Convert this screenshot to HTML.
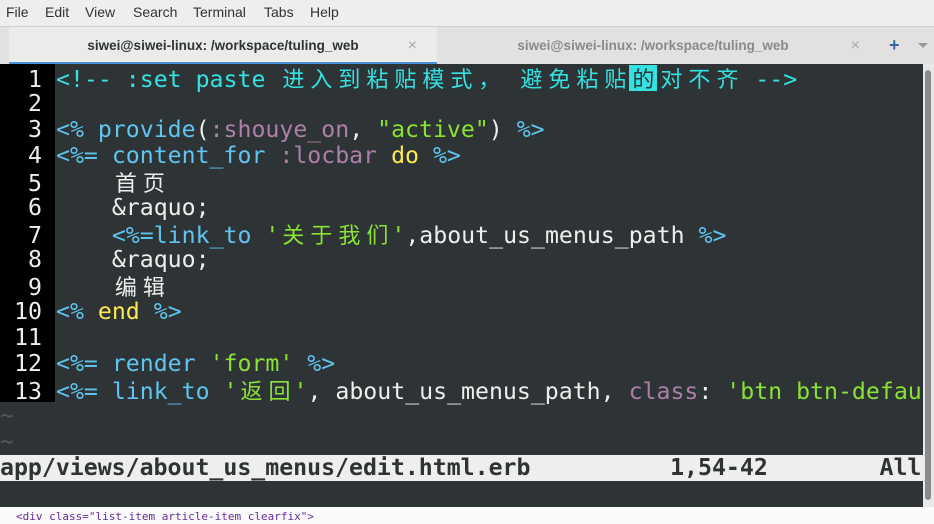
<!DOCTYPE html><html><head><meta charset="utf-8"><style>
body{margin:0;width:934px;height:524px;overflow:hidden;background:#f2f1f0;font-family:"Liberation Sans","DejaVu Sans",sans-serif;position:relative}
.menu{position:absolute;left:0;top:0;width:934px;height:26px;background:#efeeec;font-size:14px;color:#2e3436}
.menu span{position:absolute;top:4px}
.tabs{position:absolute;left:0;top:26px;width:934px;height:38px;background:#e2e1df;border-top:1px solid #d0cfcd}
.tab{position:absolute;top:0;height:38px;font-size:13.5px;font-weight:bold;text-align:center;line-height:37px}
.term{position:absolute;left:0;top:64px;width:923px;height:443px;background:#2e3436;overflow:hidden;font-family:"DejaVu Sans Mono","Noto Sans CJK SC",monospace;font-size:23.2px}
.gut{position:absolute;left:0;top:0;width:55px;height:338px;background:#000}
.l{position:absolute;left:0;height:26px;line-height:26px;white-space:pre;color:#eeeeec}
.n{display:inline-block;width:42px;text-align:right;margin-right:14px;color:#eeeeec}
.c{display:inline-block;width:28px;text-align:center;font-family:"Noto Sans CJK SC",sans-serif;font-size:22px}
.cy{color:#34e2e2}.bl{color:#5fc5f0}.pu{color:#ad7fa8}.gr{color:#8ae234}.ye{color:#fce94f}.wh{color:#eeeeec}
.sb{position:absolute;left:923px;top:64px;width:11px;height:445px;background:#e8e8e7}
</style></head><body>
<div class="menu"><span style="left:6px">File</span><span style="left:45px">Edit</span><span style="left:85px">View</span><span style="left:133px">Search</span><span style="left:193px">Terminal</span><span style="left:264px">Tabs</span><span style="left:310px">Help</span></div>
<div class="tabs">
<div class="tab" style="left:9px;width:428px;background:#ebebea;color:#2e3436;border-bottom:3px solid #4a90d9;height:35px">siwei@siwei-linux: /workspace/tuling_web<span style="position:absolute;right:20px;color:#aaa;font-weight:normal;font-size:16px">×</span></div>
<div class="tab" style="left:438px;width:430px;color:#8a8a8a">siwei@siwei-linux: /workspace/tuling_web<span style="position:absolute;right:8px;color:#aaa;font-weight:normal;font-size:16px">×</span></div>
<div style="position:absolute;left:889px;top:8px;color:#3465a4;font-size:18px;font-weight:bold">+</div>
<div style="position:absolute;left:918px;top:16px;width:0;height:0;border-left:5px solid transparent;border-right:5px solid transparent;border-top:5px solid #999"></div>
</div>
<div class="term">
<div class="gut"></div>
<div class="l" style="top:1px"><span class="n">1</span><span class="cy">&lt;!-- :set paste <span class="c">进</span><span class="c">入</span><span class="c">到</span><span class="c">粘</span><span class="c">贴</span><span class="c">模</span><span class="c">式</span><span class="c">，</span> <span class="c">避</span><span class="c">免</span><span class="c">粘</span><span class="c">贴</span><span class="c" style="background:#34e2e2;color:#2e3436">的</span><span class="c">对</span><span class="c">不</span><span class="c">齐</span> --&gt;</span></div>
<div class="l" style="top:27px"><span class="n">2</span></div>
<div class="l" style="top:53px"><span class="n">3</span><span class="bl">&lt;% provide</span><span class="wh">(</span><span class="pu">:shouye_on</span><span class="wh">, </span><span class="gr">"active"</span><span class="wh">) </span><span class="bl">%&gt;</span></div>
<div class="l" style="top:79px"><span class="n">4</span><span class="bl">&lt;%= content_for </span><span class="pu">:locbar</span> <span class="ye">do</span> <span class="bl">%&gt;</span></div>
<div class="l" style="top:105px"><span class="n">5</span>    <span class="c">首</span><span class="c">页</span></div>
<div class="l" style="top:131px"><span class="n">6</span>    &amp;raquo;</div>
<div class="l" style="top:157px"><span class="n">7</span>    <span class="bl">&lt;%=link_to </span><span class="gr">'<span class="c">关</span><span class="c">于</span><span class="c">我</span><span class="c">们</span>'</span>,about_us_menus_path <span class="bl">%&gt;</span></div>
<div class="l" style="top:183px"><span class="n">8</span>    &amp;raquo;</div>
<div class="l" style="top:209px"><span class="n">9</span>    <span class="c">编</span><span class="c">辑</span></div>
<div class="l" style="top:235px"><span class="n">10</span><span class="bl">&lt;% </span><span class="ye">end</span> <span class="bl">%&gt;</span></div>
<div class="l" style="top:261px"><span class="n">11</span></div>
<div class="l" style="top:287px"><span class="n">12</span><span class="bl">&lt;%= render </span><span class="gr">'form'</span> <span class="bl">%&gt;</span></div>
<div class="l" style="top:313px"><span class="n">13</span><span class="bl">&lt;%= link_to </span><span class="gr">'<span class="c">返</span><span class="c">回</span>'</span>, about_us_menus_path, <span class="pu">class</span>: <span class="gr">'btn btn-defau</span></div>
<div class="l" style="top:339px;color:#555753">~</div>
<div class="l" style="top:365px;color:#555753">~</div>
<div class="l" style="top:391px;width:923px;background:#eeeeec;color:#2e3436;font-weight:bold">app/views/about_us_menus/edit.html.erb          1,54-42        All</div>
</div>
<div class="sb"><div style="position:absolute;left:2px;top:6px;width:6px;height:430px;background:#8a8a8a;border-radius:3px"></div></div>
<div style="position:absolute;left:0;top:507px;width:934px;height:17px;background:#fafafa;font-family:'DejaVu Sans Mono',monospace;font-size:11px;color:#6a2a9a"><span style="position:absolute;left:16px;top:3px">&lt;div class="list-item article-item clearfix"&gt;</span></div>
</body></html>
